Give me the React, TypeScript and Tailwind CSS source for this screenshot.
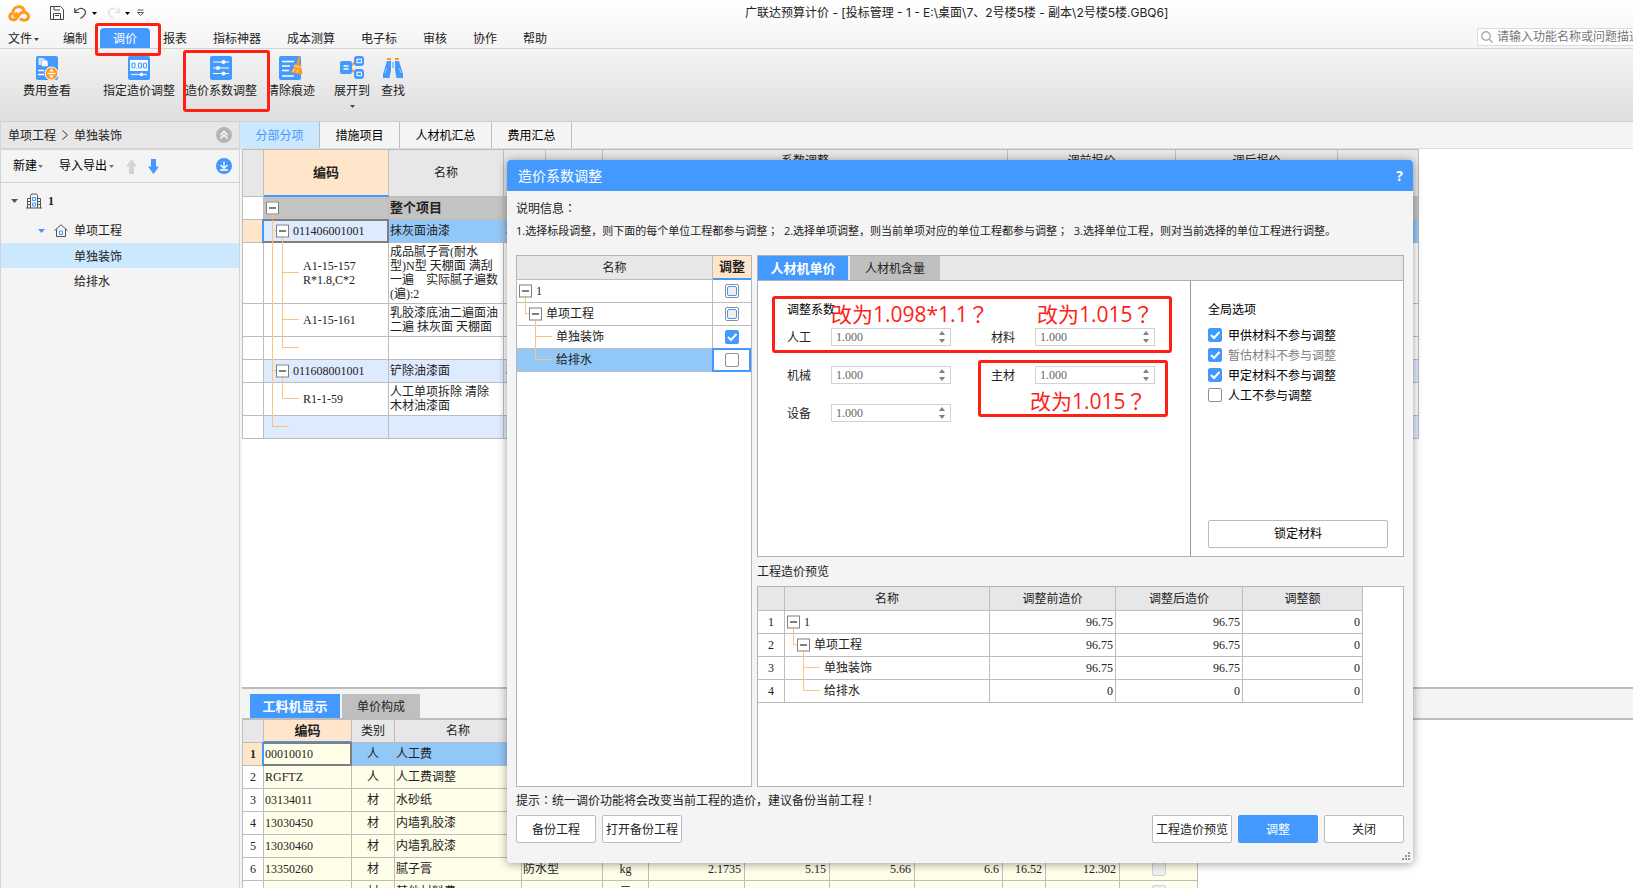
import type { ReactNode } from "react";
import clsx from "clsx";

/* --------------------- Data --------------------- */
type Guide = "tee" | "end";

type TreeInfo = {
  depth: number;
  open?: boolean;
  guide?: Guide;
  trunk?: boolean;
};

type ItemRow = TreeInfo & {
  code?: string;
  name?: string;
  unit?: string;
  height: string;
  tone: string;
  active?: boolean;
};

const itemRows: ItemRow[] = [
  { depth: 0, open: true, name: "整个项目", height: "h-[23px]", tone: "bg-[#c3c3c3] font-bold" },
  { depth: 1, open: true, guide: "tee", code: "011406001001", name: "抹灰面油漆", unit: "项", height: "h-[23px]", tone: "bg-[#92c8f8]", active: true },
  { depth: 2, guide: "tee", trunk: true, code: "A1-15-157\nR*1.8,C*2", name: "成品腻子膏(耐水\n型)N型 天棚面 满刮\n一遍　实际腻子遍数\n(遍):2", height: "h-[61px]", tone: "bg-white" },
  { depth: 2, guide: "tee", trunk: true, code: "A1-15-161", name: "乳胶漆底油二遍面油\n二遍 抹灰面 天棚面", height: "h-[33px]", tone: "bg-white" },
  { depth: 2, guide: "end", trunk: true, height: "h-[23px]", tone: "bg-white" },
  { depth: 1, open: true, guide: "tee", code: "011608001001", name: "铲除油漆面", unit: "项", height: "h-[23px]", tone: "bg-[#deeafe]" },
  { depth: 2, guide: "end", trunk: true, code: "R1-1-59", name: "人工单项拆除 清除\n木材油漆面", height: "h-[33px]", tone: "bg-white" },
  { depth: 1, guide: "end", height: "h-[23px]", tone: "bg-[#deeafe]" },
];

const resourceRows = [
  { code: "00010010", kind: "人", name: "人工费" },
  { code: "RGFTZ", kind: "人", name: "人工费调整" },
  { code: "03134011", kind: "材", name: "水砂纸" },
  { code: "13030450", kind: "材", name: "内墙乳胶漆" },
  { code: "13030460", kind: "材", name: "内墙乳胶漆" },
  { code: "13350260", kind: "材", name: "腻子膏", spec: "防水型", unit: "kg", nums: ["2.1735", "5.15", "5.66", "6.6", "16.52", "12.302"] },
  { code: "00470700", kind: "材", name: "其他材料费", unit: "元", nums: ["0.0000", "1", "1", "1", "0", "0.0000"] },
];

type ProjectRow = TreeInfo & { name: string; state: "partial" | "on" | "off"; before: string };

const projectRows: ProjectRow[] = [
  { depth: 0, open: true, name: "1", state: "partial", before: "96.75" },
  { depth: 1, open: true, guide: "end", name: "单项工程", state: "partial", before: "96.75" },
  { depth: 2, guide: "tee", name: "单独装饰", state: "on", before: "96.75" },
  { depth: 2, guide: "end", name: "给排水", state: "off", before: "0" },
];

const globalOptions = [
  { id: "opt-a", label: "甲供材料不参与调整", checked: true },
  { id: "opt-b", label: "暂估材料不参与调整", checked: true, muted: true },
  { id: "opt-c", label: "甲定材料不参与调整", checked: true },
  { id: "opt-d", label: "人工不参与调整", checked: false },
];

const cell = "border-r border-b border-[#bdbdbd]";
const gridFont = "font-['Liberation_Serif','Noto_Sans_CJK_SC',serif]";

/* --------------------- Page --------------------- */
export default function App() {
  return (
    <div className="relative flex h-screen flex-col overflow-hidden bg-[#f4f4f4] font-['Open_Sans','Noto_Sans_CJK_SC',sans-serif] text-xs text-[#222]">
      <TopBar />
      <Ribbon />
      <div className="flex min-h-0 flex-1">
        <Sidebar />
        <Workspace />
      </div>
      <AdjustDialog />

      {/* Review marks */}
      <Mark className="left-[95px] top-[23px] h-[33px] w-[66px]" />
      <Mark className="left-[183px] top-[50px] h-[62px] w-[87px]" />
      <Mark className="left-[772px] top-[296px] h-[57px] w-[400px]" />
      <Mark className="left-[978px] top-[360px] h-[57px] w-[190px]" />
      <Note className="left-[831px] top-[300px]">改为1.098*1.1</Note>
      <Note className="left-[1037px] top-[300px]">改为1.015</Note>
      <Note className="left-[1030px] top-[387px]">改为1.015</Note>
    </div>
  );
}

const Mark = ({ className }: { className: string }) => (
  <div className={clsx("pointer-events-none absolute rounded-[3px] border-[3px] border-[#ff2015]", className)} />
);

const Note = ({ className, children }: { className: string; children: ReactNode }) => (
  <div className={clsx("absolute whitespace-nowrap text-[21px] leading-7 text-[#ff2015]", className)}>
    {children}
    <Punct>？</Punct>
  </div>
);

// full-width marks centred in their box
const Punct = ({ children }: { children: ReactNode }) => (
  <span lang="ja" className="font-['Noto_Sans_CJK_JP',sans-serif] leading-none">{children}</span>
);

/* --------------------- Top bar --------------------- */
const menuItems = ["报表", "指标神器", "成本测算", "电子标", "审核", "协作", "帮助"];

const TopBar = () => (
  <header className="border-b border-[#d4d4d4] bg-gradient-to-b from-white to-[#f4f4f4]">
    <div className="relative flex h-[26px] items-center pl-2">
      <svg width="22" height="17" viewBox="0 0 22 17" fill="none" stroke="#ff9a1f" strokeWidth="3" strokeLinecap="round" strokeLinejoin="round">
        <path d="M6 14.800C1 15.500 .5 9 4.800 8.200C4.800 3.800 8 1.800 11 1.800c2.500 0 4.500 1.500 5 3.800" />
        <path d="M8.500 8.500L6.500 11M6 14.800c4 0 4-6.500 8-7.300c3.500-.7 6.500 1 6.500 4c0 3.500-4 4.500-7.500 2.800" />
      </svg>
      <button aria-label="保存" className="ml-5">
        <svg width="14" height="14" viewBox="0 0 14 14" fill="none" stroke="#444">
          <path d="M.5 .5h10l3 3v10H.5zM3.500 13.500v-6h7v6M4 .5v3.500h6M5 9.500h4" />
        </svg>
      </button>
      <button aria-label="撤销" className="ml-[10px]">
        <svg width="13" height="12" viewBox="0 0 13 12" fill="none" stroke="#444" strokeWidth="1.200">
          <path d="M.8 1v4.500h4.500M1 5.300C3.500 1 8 .3 10.500 2.800c2.500 2.800 0 6-4 8.700" />
        </svg>
      </button>
      <Caret className="ml-[5px] text-black" />
      <button aria-label="恢复" className="ml-[10px]" disabled>
        <svg width="13" height="12" viewBox="0 0 13 12" fill="none" stroke="#ddd" strokeWidth="1.200">
          <path d="M12.200 1v4.500H7.700M12 5.300C9.500 1 5 .3 2.500 2.800c-2.500 2.800 0 6 4 8.700" />
        </svg>
      </button>
      <Caret className="ml-[5px] text-black" />
      <svg width="7" height="8" viewBox="0 0 7 8" fill="none" stroke="#555" className="ml-[7px]">
        <path d="M.5 1h6M.5 3.500l3 3l3-3z" />
      </svg>
      <h1 className="absolute left-[745px] whitespace-nowrap font-['Inter','Noto_Sans_CJK_SC',sans-serif] text-xs leading-6">
        广联达预算计价 - [投标管理 - 1 - E:\桌面\7、2号楼5楼 - 副本\2号楼5楼.GBQ6]
      </h1>
    </div>
    <nav className="flex h-[22px] items-end whitespace-nowrap leading-[18px]">
      <button className="flex w-[50px] items-center gap-[2px] pl-2 pt-[2px]">
        文件
        <Caret className="text-[#444]" />
      </button>
      <button className="w-[50px] px-[13px] pt-[2px]">编制</button>
      <button className="w-[50px] rounded-t bg-[#4499ff] pt-[2px] text-white">调价</button>
      {menuItems.map((item) => (
        <button key={item} className="px-[13px] pt-[2px]">{item}</button>
      ))}
      <div className="mb-[2px] ml-auto flex h-[18px] w-[156px] items-center gap-1 overflow-hidden rounded-l-[2px] border border-r-0 border-[#dcdcdc] bg-white pl-[3px]">
        <svg width="12" height="12" viewBox="0 0 12 12" fill="none" stroke="#aaa" strokeWidth="1.400" className="shrink-0">
          <circle cx="5" cy="5" r="4.200" />
          <path d="M8 8l3.500 3.500" />
        </svg>
        <input aria-label="搜索" placeholder="请输入功能名称或问题描述" className="w-40 shrink-0 bg-transparent outline-none placeholder:text-[#777]" />
      </div>
    </nav>
  </header>
);

const Caret = ({ className }: { className?: string }) => (
  <svg width="5" height="3" viewBox="0 0 5 3" className={clsx("shrink-0", className)} fill="currentColor">
    <path d="M0 0h5L2.500 3z" />
  </svg>
);

/* --------------------- Ribbon --------------------- */
const Ribbon = () => (
  <div className="flex h-[73px] border-b border-[#cfcfcf] bg-gradient-to-b from-[#f4f4f4] to-[#dedede] pl-[23px] pt-[7px]">
    <Tool label="费用查看" icon={<CostIcon />} />
    <Tool label="指定造价调整" icon={<TargetIcon />} className="ml-8" />
    <Tool label="造价系数调整" icon={<SlidersIcon />} className="ml-[10px]" />
    <Tool label="清除痕迹" icon={<BroomIcon />} className="ml-[10px]" />
    <Tool label="展开到" icon={<ExpandIcon />} className="ml-[19px]" menu />
    <Tool label="查找" icon={<BinocularsIcon />} className="ml-[11px]" />
  </div>
);

type ToolProps = { label: string; icon: ReactNode; className?: string; menu?: boolean };

const Tool = ({ label, icon, className, menu }: ToolProps) => (
  <button className={clsx("flex flex-col items-center self-start whitespace-nowrap", className)}>
    {icon}
    <span className="leading-[22px]">{label}</span>
    {menu && <Caret className="mt-[3px] text-[#444]" />}
  </button>
);

const CostIcon = () => (
  <svg width="22" height="24" viewBox="0 0 22 24" fill="none">
    <rect width="22" height="24" rx="2" fill="#4499ff" />
    <path d="M2.500 2h5l2 2v5h-7z" fill="#cfe4ff" />
    <path d="M5.500 4h5l1.500 2v4.500H5.500z" fill="#fff" stroke="#4499ff" strokeWidth=".5" />
    <path d="M2 14.500h6M2 18.500h6" stroke="#fff" strokeWidth="1.500" />
    <circle cx="15.500" cy="17.500" r="6.500" fill="#ff9a1f" stroke="#fff" />
    <path d="M11.500 17.500h8" stroke="#fff" strokeWidth="1.300" />
    <path d="M15.500 12.500l2.300 3h-4.600zM15.500 22.500l2.300-3h-4.600z" fill="#fff" />
  </svg>
);

const TargetIcon = () => (
  <svg width="22" height="24" viewBox="0 0 22 24" fill="none">
    <rect width="22" height="24" rx="2" fill="#4499ff" />
    <rect x="2" y="4" width="18" height="11" fill="#fff" />
    <g stroke="#4499ff" strokeWidth="1.200">
      <rect x="4" y="7" width="3" height="5" rx="1.200" />
      <rect x="10.500" y="7" width="3" height="5" rx="1.200" />
      <rect x="15.500" y="7" width="3" height="5" rx="1.200" />
      <path d="M8.300 12.500h1" />
    </g>
    <path d="M3 18.500h16" stroke="#cfe4ff" strokeWidth="1.300" />
    <circle cx="13.500" cy="18.500" r="1.800" fill="#fff" />
  </svg>
);

const SlidersIcon = () => (
  <svg width="22" height="24" viewBox="0 0 22 24" fill="none">
    <rect width="22" height="24" rx="2" fill="#4499ff" />
    <path d="M3 6h16M3 12h16M3 17.500h16" stroke="#fff" strokeWidth="1.100" />
    <circle cx="13.500" cy="6" r="2" fill="#fff" />
    <circle cx="8" cy="12" r="2" fill="#fff" />
    <circle cx="13.500" cy="17.500" r="2" fill="#fff" />
  </svg>
);

const BroomIcon = () => (
  <svg width="24" height="24" viewBox="0 0 24 24" fill="none">
    <rect x="0" width="22" height="24" rx="2" fill="#4499ff" />
    <path d="M3 5.500h12M3 10h8M3 14.500h7M3 20h12" stroke="#fff" strokeWidth="1.500" />
    <path d="M19.500 .5l2 1l-1.500 6.500l2 1.500l1.500 8.500l-3 .3l-10-2.300c2.500-1 4-3 5-7l2-1z" fill="#ff9a1f" />
    <path d="M14.500 9.500l7 2M14 15.500l1.500-3M18 16.500l.8-3" stroke="#fff" strokeWidth=".8" />
  </svg>
);

const ExpandIcon = () => (
  <svg width="24" height="24" viewBox="0 0 24 24" fill="none">
    <path d="M11 10l4-4M11 13l4 4" stroke="#ff9a1f" strokeWidth="1.800" />
    <rect x="0" y="5" width="12" height="13" rx="2" fill="#4499ff" />
    <path d="M3.500 10h5M3.500 13h5" stroke="#fff" strokeWidth="1.300" />
    <rect x="14" y="0" width="10" height="10" rx="3" fill="#4499ff" />
    <rect x="14" y="13" width="10" height="10" rx="3" fill="#4499ff" />
    <rect x="17" y="3.200" width="4.500" height="3.500" stroke="#fff" />
    <rect x="17" y="16.200" width="4.500" height="3.500" stroke="#fff" />
  </svg>
);

const BinocularsIcon = () => (
  <svg width="22" height="24" viewBox="0 0 22 24" fill="none">
    <path d="M5 5h4v9l-1.500 8H1V18zM17 5h-4v9l1.500 8H21V18z" fill="#4499ff" />
    <path d="M10.200 6h1.600v6h-1.600z" fill="#7db8ff" />
    <path d="M5 2h4v2H5zM13 2h4v2h-4z" fill="#ff9a1f" />
    <path d="M4.500 12L3 17M17.500 12l1.500 5" stroke="#9ccaff" />
  </svg>
);

/* --------------------- Sidebar --------------------- */
const Sidebar = () => (
  <aside className="flex w-60 shrink-0 flex-col border-l border-r border-[#d4d4d4] bg-[#f4f4f4]">
    <div className="flex h-7 items-center border-b-2 border-[#d4d4d4] bg-[#e7e7e7] pl-[7px] pr-[7px]">
      <span className="pt-[2px]">单项工程</span>
      <svg width="6" height="10" viewBox="0 0 6 10" fill="none" stroke="#333" className="mx-[6px]">
        <path d="M.5 .5l5 4.500l-5 4.500" />
      </svg>
      <span className="pt-[2px]">单独装饰</span>
      <button aria-label="收起" className="ml-auto">
        <svg width="16" height="16" viewBox="0 0 16 16" fill="none">
          <circle cx="8" cy="8" r="8" fill="#b4b4b4" />
          <path d="M4.500 8L8 4.500L11.500 8M4.500 11.500L8 8l3.500 3.500" stroke="#fff" strokeWidth="1.400" />
        </svg>
      </button>
    </div>
    <div className="flex h-[33px] items-center border-b border-[#d4d4d4] pl-3 pr-[7px] text-black">
      <button className="flex items-center gap-[1px]">新建<Caret className="text-[#777]" /></button>
      <button className="ml-4 flex items-center gap-[2px]">导入导出<Caret className="text-[#777]" /></button>
      <button aria-label="上移" className="ml-3 text-[#d3d3d3]"><ArrowGlyph /></button>
      <button aria-label="下移" className="ml-[11px] rotate-180 text-[#4499ff]"><ArrowGlyph /></button>
      <button aria-label="下载" className="ml-auto">
        <svg width="16" height="16" viewBox="0 0 16 16" fill="none">
          <circle cx="8" cy="8" r="8" fill="#4499ff" />
          <path d="M8 3.500v6M4.500 7L8 10.300L11.500 7M4 12h8" stroke="#fff" strokeWidth="1.300" />
        </svg>
      </button>
    </div>
    <ul>
      <li className="flex h-[35px] items-center pl-[10px]">
        <svg width="7" height="4" viewBox="0 0 7 4" fill="#555"><path d="M0 0h7L3.500 4z" /></svg>
        <svg width="16" height="16" viewBox="0 0 16 16" fill="none" stroke="#555" className="ml-2">
          <path d="M0 15h16M4.500 15V2.500l1-1.500h5l1 1.500V15M1.500 15V5.500h3M14.500 15V5.500h-3M1.500 8.500h3M1.500 11.500h3M11.500 8.500h3M11.500 11.500h3" />
          <path d="M6.500 4.500h3v3h-3zM6.500 10h3v3h-3z" stroke="#4499ff" />
        </svg>
        <span className={clsx("ml-[6px] font-bold", gridFont)}>1</span>
      </li>
      <li className="flex h-[25px] items-center pl-[37px]">
        <svg width="7" height="4" viewBox="0 0 7 4" fill="#4499ff"><path d="M0 0h7L3.500 4z" /></svg>
        <svg width="14" height="13" viewBox="0 0 14 13" fill="none" stroke="#555" className="ml-[9px]">
          <path d="M.5 6.500L7 .8l6.500 5.700M2.500 5v7.500h9V5" />
          <path d="M5.500 7h3v3.500h-3z" stroke="#4499ff" />
        </svg>
        <span className="ml-[6px]">单项工程</span>
      </li>
      <li className="flex h-[25px] items-center bg-[#cce8ff] pl-[73px] pt-[2px]">单独装饰</li>
      <li className="flex h-[25px] items-center pl-[73px] pt-[2px]">给排水</li>
    </ul>
  </aside>
);

const ArrowGlyph = () => (
  <svg width="11" height="15" viewBox="0 0 11 15" fill="currentColor">
    <path d="M5.500 0L11 7.500H8V15H3V7.500H0z" />
  </svg>
);

/* --------------------- Workspace --------------------- */
const Workspace = () => (
  <main className="flex min-w-0 flex-1 flex-col">
    <div className="flex h-[27px] shrink-0 border-b border-[#dcdcdc] text-black">
      <button className="w-20 border-r border-[#bdbdbd] bg-[#cce8ff] pt-[2px] text-[#4499ff]">分部分项</button>
      <button className="w-20 border-r border-[#bdbdbd] pt-[2px]">措施项目</button>
      <button className="w-[92px] border-r border-[#bdbdbd] pt-[2px]">人材机汇总</button>
      <button className="w-20 border-r border-[#bdbdbd] pt-[2px]">费用汇总</button>
    </div>
    <div className="ml-[2px] min-h-0 flex-1 overflow-hidden bg-white">
      <ItemTable />
    </div>
    <div className="ml-[2px] flex h-[201px] shrink-0 flex-col border-t-2 border-[#bdbdbd]">
      <div className="flex h-[29px] shrink-0 items-end gap-[2px] pl-2">
        <button className="h-6 w-[90px] bg-[#4499ff] pt-[2px] text-[13px] font-bold text-white">工料机显示</button>
        <button className="h-6 w-[78px] bg-[#bfbfbf] pt-[2px]">单价构成</button>
      </div>
      <div className="min-h-0 flex-1 overflow-hidden border-t-2 border-[#bdbdbd] bg-white">
        <ResourceTable />
      </div>
    </div>
  </main>
);

const ItemTable = () => (
  <table className={clsx("w-[1177px] table-fixed border-separate border-spacing-0 border-l border-t border-[#bdbdbd]", gridFont)}>
    <colgroup>
      <col className="w-[21px]" />
      <col className="w-[125px]" />
      <col className="w-[115px]" />
      <col className="w-[42px]" />
      <col className="w-[57px]" />
      <col className="w-[405px]" />
      <col className="w-[168px]" />
      <col className="w-[162px]" />
      <col className="w-[81px]" />
    </colgroup>
    <thead className="bg-[#e7e7e7]">
      <tr className="h-[23px]">
        <td rowSpan={2} className={cell} />
        <th rowSpan={2} className="border-b-2 border-r border-b-[#4499ff] border-r-[#bdbdbd] bg-[#ffe6cb] text-[13px]">编码</th>
        <th rowSpan={2} className={clsx(cell, "font-normal")}>名称</th>
        <td rowSpan={2} className={cell} />
        <td rowSpan={2} className={cell} />
        <th className={clsx(cell, "p-0 font-normal leading-4")}>系数调整</th>
        <th className={clsx(cell, "p-0 font-normal leading-4")}>调前报价</th>
        <th className={clsx(cell, "p-0 font-normal leading-4")}>调后报价</th>
        <td rowSpan={2} className={cell} />
      </tr>
      <tr className="h-6">
        <td className={cell} />
        <td className={cell} />
        <td className={cell} />
      </tr>
    </thead>
    <tbody>
      {itemRows.map((row, i) => (
        <tr key={i} className={clsx(row.height, row.tone)}>
          <td className={clsx(cell, row.active ? "bg-[#ffe6cb]" : "bg-white")} />
          <td className={clsx(cell, "relative p-0", row.active && "bg-[#deeafe]")}>
            {row.active && <ActiveFrame />}
            <TreeLabel {...row}>{row.code}</TreeLabel>
          </td>
          <td className={clsx(cell, "whitespace-pre p-0 pl-[1px] leading-[14px]", i === 0 && "text-[13px]")}>{row.name}</td>
          <td className={clsx(cell, "p-0 pl-[2px] leading-[14px]")}>{row.unit}</td>
          <td className={cell} />
          <td className={cell} />
          <td className={cell} />
          <td className={cell} />
          <td className={cell} />
        </tr>
      ))}
    </tbody>
  </table>
);

const ResourceTable = () => (
  <table className={clsx("w-[956px] table-fixed border-separate border-spacing-0 border-l border-[#bdbdbd]", gridFont)}>
    <colgroup>
      <col className="w-[21px]" />
      <col className="w-[88px]" />
      <col className="w-[43px]" />
      <col className="w-[127px]" />
      <col className="w-[81px]" />
      <col className="w-[46px]" />
      <col className="w-[96px]" />
      <col className="w-[85px]" />
      <col className="w-[85px]" />
      <col className="w-[88px]" />
      <col className="w-[43px]" />
      <col className="w-[74px]" />
      <col className="w-[78px]" />
    </colgroup>
    <thead>
      <tr className="h-[23px] bg-[#e7e7e7] leading-4">
        <td className={cell} />
        <th className="border-b-2 border-r border-b-[#4499ff] border-r-[#bdbdbd] bg-[#ffe6cb] p-0 text-[13px]">编码</th>
        <th className={clsx(cell, "p-0 font-normal")}>类别</th>
        <th className={clsx(cell, "p-0 font-normal")}>名称</th>
        <td colSpan={9} className={cell} />
      </tr>
    </thead>
    <tbody>
      {resourceRows.map((row, i) => (
        <tr key={row.code} className={clsx("h-[23px] leading-4", i === 0 ? "bg-[#92c8f8]" : "bg-[#ffffe9]")}>
          <td className={clsx(cell, "p-0 text-center", i === 0 ? "bg-[#ffe6cb] font-bold" : "bg-white")}>{i + 1}</td>
          <td className={clsx(cell, "relative p-0 pl-[1px]", i === 0 && "bg-[#ffffe9]")}>
            {i === 0 && <ActiveFrame />}
            {row.code}
          </td>
          <td className={clsx(cell, "p-0 text-center")}>{row.kind}</td>
          <td className={clsx(cell, "p-0 pl-[1px]")}>{row.name}</td>
          <td className={clsx(cell, "p-0 pl-[1px]")}>{row.spec}</td>
          <td className={clsx(cell, "p-0 text-center")}>{row.unit}</td>
          {[0, 1, 2, 3, 4, 5].map((n) => (
            <td key={n} className={clsx(cell, "p-0 pr-[3px] text-right")}>{row.nums?.[n]}</td>
          ))}
          <td className={clsx(cell, "p-0")}>
            {row.nums && (
              <div className="flex justify-center">
                <Check label={row.name} disabled />
              </div>
            )}
          </td>
        </tr>
      ))}
    </tbody>
  </table>
);

const ActiveFrame = () => (
  <span className="pointer-events-none absolute -bottom-px -left-[2px] -right-px -top-px border-2 border-[#7f7f7f] border-l-[#4499ff]" />
);

/* --------------------- Tree cell --------------------- */
const boxLeft = ["left-[2px]", "left-[12px]", "left-[22px]"];
const lineLeft = ["left-[8px]", "left-[18px]", "left-[28px]"];
const textLeft = ["pl-[19px]", "pl-[29px]", "pl-[39px]"];

const TreeLabel = ({ depth, open, guide, trunk, children }: TreeInfo & { children?: ReactNode }) => (
  <>
    {trunk && <span className={clsx("absolute -bottom-px top-0 border-l border-[#ffc47c]", lineLeft[0])} />}
    {guide && (
      <span
        className={clsx("absolute top-0 h-1/2 border-b border-l border-[#ffc47c]", open ? "w-1" : "w-[17px]", lineLeft[depth - 1])}
      />
    )}
    {guide === "tee" && <span className={clsx("absolute -bottom-px top-1/2 border-l border-[#ffc47c]", lineLeft[depth - 1])} />}
    {open && (
      <>
        <span className={clsx("absolute -bottom-px top-1/2 border-l border-[#ffc47c]", lineLeft[depth])} />
        <button
          aria-label="折叠"
          className={clsx("absolute top-1/2 flex size-[13px] -translate-y-1/2 items-center justify-center border border-[#7f7f7f] bg-white", boxLeft[depth])}
        >
          <span className="h-px w-[7px] bg-black" />
        </button>
      </>
    )}
    <div className={clsx("whitespace-pre leading-[14px]", textLeft[depth])}>{children}</div>
  </>
);

/* --------------------- Checkbox --------------------- */
type CheckProps = { label?: string; id?: string; checked?: boolean; partial?: boolean; disabled?: boolean };

const Check = ({ label, id, checked, partial, disabled }: CheckProps) => (
  <span className="relative block size-[14px] shrink-0">
    <input
      type="checkbox"
      id={id}
      aria-label={label}
      defaultChecked={checked}
      disabled={disabled}
      className="peer block size-[14px] appearance-none rounded-[2px] border border-[#8f8f8f] bg-white checked:border-[#4499ff] checked:bg-[#4499ff] disabled:border-[#d0d0d0] disabled:bg-[#f0f0f0]"
    />
    <svg viewBox="0 0 14 14" fill="none" stroke="#fff" strokeWidth="2" className="pointer-events-none absolute inset-0 hidden peer-checked:block">
      <path d="M3 7l3 3l5.500-6" />
    </svg>
    {partial && <span className="pointer-events-none absolute inset-[2px] rounded-[2px] border border-[#4499ff] bg-[#f0f0f0]" />}
  </span>
);

/* --------------------- Dialog --------------------- */
const AdjustDialog = () => (
  <section
    role="dialog"
    aria-label="造价系数调整"
    className="absolute left-[507px] top-[160px] flex h-[703px] w-[906px] flex-col rounded bg-[#f4f4f4] shadow-[0_1px_10px_rgba(0,0,0,0.4)]"
  >
    <div className="flex h-[31px] shrink-0 items-center justify-between rounded-t bg-[#4499ff] pl-[11px] pr-[10px] text-sm text-white">
      <h2>造价系数调整</h2>
      <button aria-label="帮助" className="font-bold">?</button>
    </div>
    <div className="flex min-h-0 flex-1 flex-col px-[9px] pb-5 pt-[6px]">
      <p className="h-[23px] leading-[23px]">说明信息<Punct>：</Punct></p>
      <p className="h-[23px] whitespace-pre text-[11px] leading-[22px]">
        1.选择标段调整，则下面的每个单位工程都参与调整<Punct>；</Punct>  2.选择单项调整，则当前单项对应的单位工程都参与调整<Punct>；</Punct>  3.选择单位工程，则对当前选择的单位工程进行调整。
      </p>
      <div className="mt-3 flex min-h-0 flex-1 gap-[5px]">
        <div className="w-[236px] shrink-0 border border-[#b5b5b5] bg-white">
          <ProjectTable />
        </div>
        <div className="flex min-w-0 flex-1 flex-col">
          <FactorPanel />
          <p className="leading-[29px]">工程造价预览</p>
          <div className="min-h-0 flex-1 border border-[#b5b5b5] bg-white">
            <PreviewTable />
          </div>
        </div>
      </div>
      <p className="h-7 leading-7">提示<Punct>：</Punct>统一调价功能将会改变当前工程的造价，建议备份当前工程<Punct>！</Punct></p>
      <div className="flex gap-[6px]">
        <DialogButton>备份工程</DialogButton>
        <DialogButton>打开备份工程</DialogButton>
        <span className="flex-1" />
        <DialogButton>工程造价预览</DialogButton>
        <DialogButton primary>调整</DialogButton>
        <DialogButton>关闭</DialogButton>
      </div>
    </div>
    <svg width="8" height="8" viewBox="0 0 8 8" fill="#999" className="absolute bottom-[3px] right-[3px]">
      <path d="M6 0h2v2H6zM3 3h2v2H3zM6 3h2v2H6zM0 6h2v2H0zM3 6h2v2H3zM6 6h2v2H6z" />
    </svg>
  </section>
);

const DialogButton = ({ primary, children }: { primary?: boolean; children: ReactNode }) => (
  <button
    className={clsx(
      "h-7 w-20 whitespace-nowrap rounded-[2px] border pt-[2px]",
      primary ? "border-[#4499ff] bg-[#4499ff] text-white" : "border-[#bcbcbc] bg-white"
    )}
  >
    {children}
  </button>
);

const ProjectTable = () => (
  <table className={clsx("w-full table-fixed border-separate border-spacing-0", gridFont)}>
    <thead>
      <tr className="h-6 bg-[#e7e7e7] leading-4">
        <th className={clsx(cell, "p-0 font-normal")}>名称</th>
        <th className="w-[38px] border-b-2 border-[#4499ff] bg-[#ffe6cb] p-0 text-[13px]">调整</th>
      </tr>
    </thead>
    <tbody>
      {projectRows.map((row) => (
        <tr key={row.name} className={clsx("h-[23px]", row.state === "off" && "bg-[#92c8f8]")}>
          <td className={clsx(cell, "relative p-0")}>
            <TreeLabel {...row}>{row.name}</TreeLabel>
          </td>
          <td className="relative border-b border-[#bdbdbd] bg-white p-0">
            {row.state === "off" && <span className="pointer-events-none absolute -bottom-px -left-px -top-px right-0 border-2 border-[#4499ff]" />}
            <div className="flex justify-center">
              <Check label={row.name} checked={row.state === "on"} partial={row.state === "partial"} />
            </div>
          </td>
        </tr>
      ))}
    </tbody>
  </table>
);

const FactorPanel = () => (
  <div className="flex h-[302px] shrink-0 flex-col border border-[#b0b0b0] bg-white">
    <div className={clsx("flex h-[25px] gap-[2px] border-b border-[#b0b0b0] bg-[#e7e7e7]", gridFont)}>
      <button className="w-[90px] bg-[#4499ff] pt-[2px] text-[13px] font-bold text-white">人材机单价</button>
      <button className="w-[90px] bg-[#bfbfbf] pt-[2px]">人材机含量</button>
    </div>
    <div className="flex min-h-0 flex-1">
      <div className="flex-1 pl-[29px] pt-5">
        <h3 className="leading-[18px] text-black">调整系数</h3>
        <div className="mt-[9px] flex w-[368px] flex-wrap gap-x-10 gap-y-5">
          <Factor id="labor" label="人工" />
          <Factor id="material" label="材料" />
          <Factor id="machine" label="机械" />
          <Factor id="main-material" label="主材" />
          <Factor id="equipment" label="设备" />
        </div>
      </div>
      <div className="flex w-[213px] flex-col items-start border-l border-[#999] pb-2 pl-[17px] pt-5 text-black">
        <h3 className="leading-[18px]">全局选项</h3>
        <ul className="mt-[6px]">
          {globalOptions.map((opt) => (
            <li key={opt.id} className="flex h-5 items-center gap-[6px]">
              <Check id={opt.id} checked={opt.checked} />
              <label htmlFor={opt.id} className={clsx("pt-[2px]", opt.muted && "text-[#808080]")}>{opt.label}</label>
            </li>
          ))}
        </ul>
        <button className="mt-auto h-7 w-[180px] rounded-[2px] border border-[#bcbcbc]">锁定材料</button>
      </div>
    </div>
  </div>
);

const Factor = ({ id, label }: { id: string; label: string }) => (
  <div className="flex h-[18px] items-center">
    <label htmlFor={id} className="w-11 pt-[2px]">{label}</label>
    <div className="flex h-[18px] w-[120px] items-center border border-[#d2d2d2] pr-[5px]">
      <input id={id} defaultValue="1.000" className={clsx("w-full min-w-0 bg-transparent pl-1 leading-4 text-[#666] outline-none", gridFont)} />
      <svg width="6" height="12" viewBox="0 0 6 12" fill="#808080" className="shrink-0">
        <path d="M3 0l3 4H0zM3 12l3-4H0z" />
      </svg>
    </div>
  </div>
);

const PreviewTable = () => (
  <table className={clsx("w-[605px] table-fixed border-separate border-spacing-0", gridFont)}>
    <colgroup>
      <col className="w-[27px]" />
      <col className="w-[205px]" />
      <col className="w-[126px]" />
      <col className="w-[127px]" />
      <col className="w-[120px]" />
    </colgroup>
    <thead>
      <tr className="h-6 bg-[#e7e7e7] leading-4">
        <td className={cell} />
        <th className={clsx(cell, "p-0 font-normal")}>名称</th>
        <th className={clsx(cell, "p-0 font-normal")}>调整前造价</th>
        <th className={clsx(cell, "p-0 font-normal")}>调整后造价</th>
        <th className={clsx(cell, "p-0 font-normal")}>调整额</th>
      </tr>
    </thead>
    <tbody>
      {projectRows.map((row, i) => (
        <tr key={row.name} className="h-[23px] leading-4">
          <td className={clsx(cell, "p-0 text-center")}>{i + 1}</td>
          <td className={clsx(cell, "relative p-0")}>
            <TreeLabel {...row}>{row.name}</TreeLabel>
          </td>
          <td className={clsx(cell, "p-0 pr-[2px] text-right")}>{row.before}</td>
          <td className={clsx(cell, "p-0 pr-[2px] text-right")}>{row.before}</td>
          <td className={clsx(cell, "p-0 pr-[2px] text-right")}>0</td>
        </tr>
      ))}
    </tbody>
  </table>
);
